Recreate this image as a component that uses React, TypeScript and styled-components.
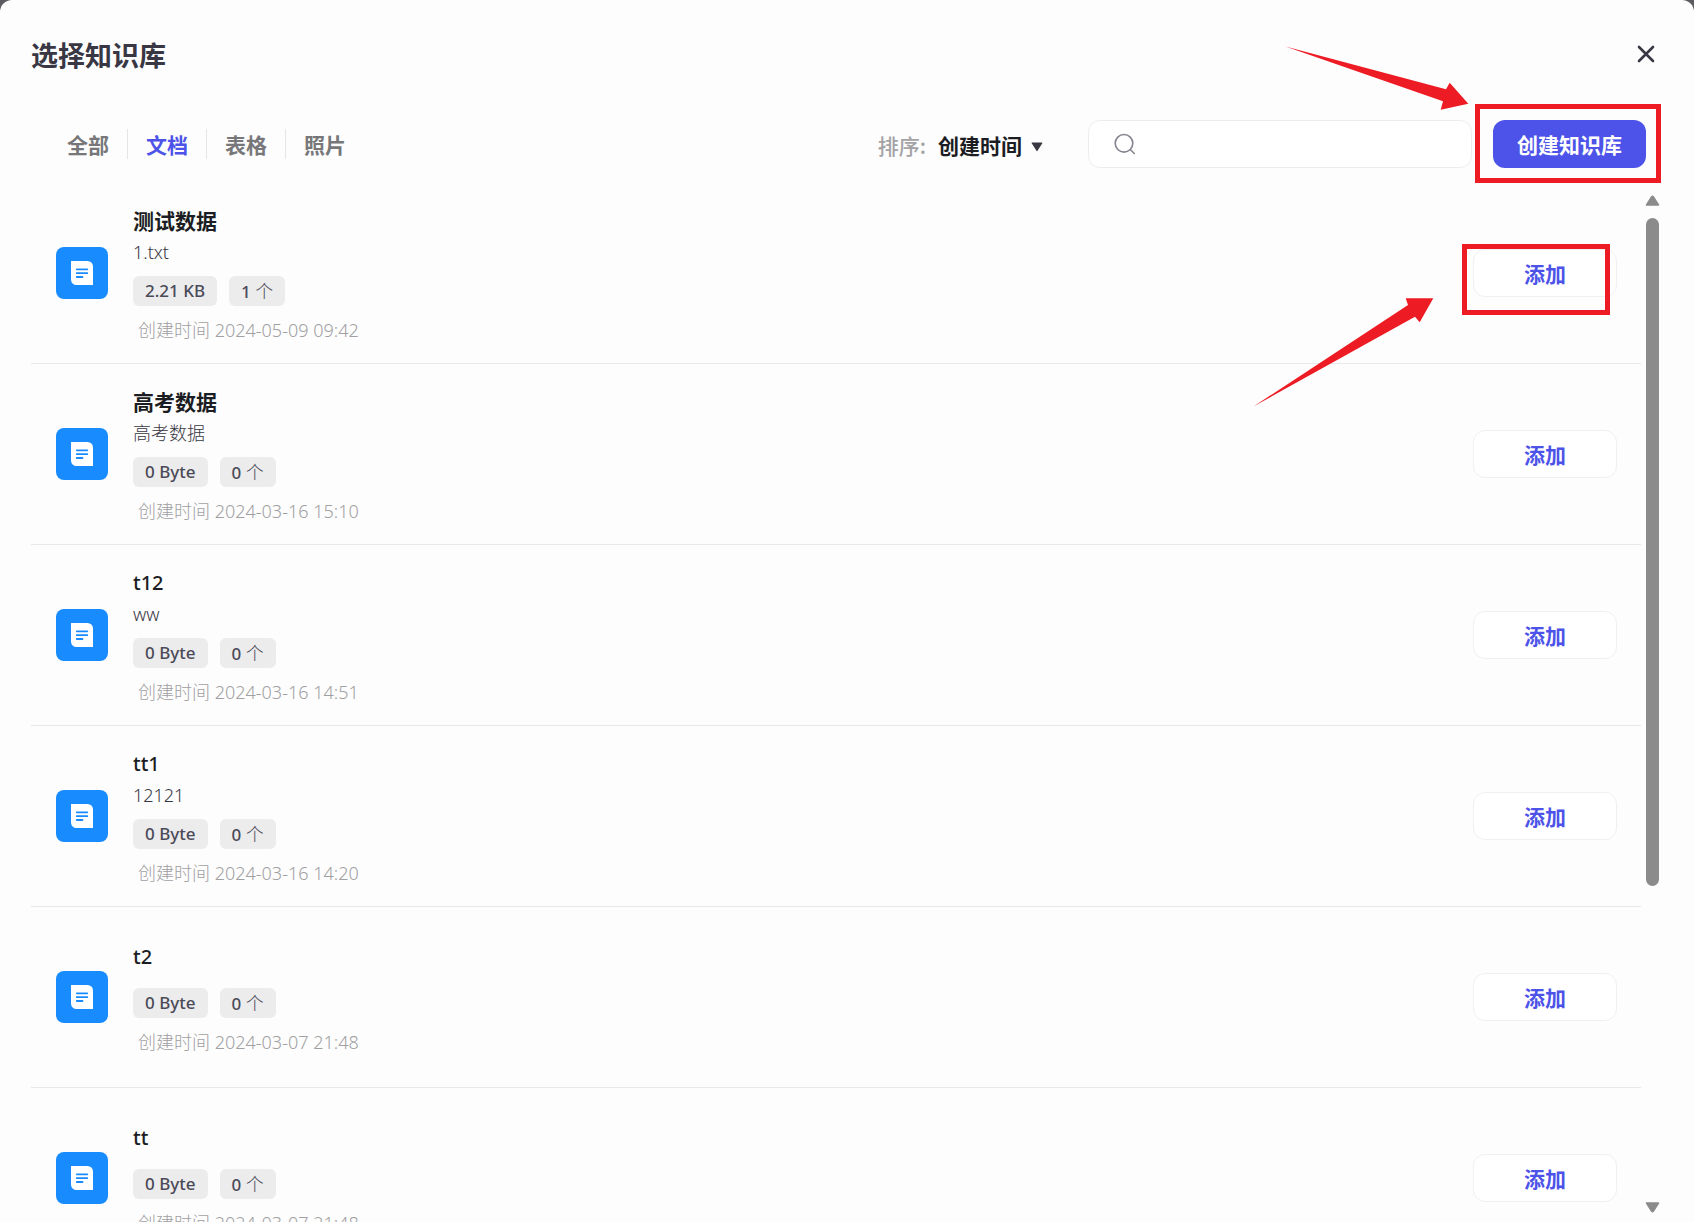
import React, { useState } from "react";
import styled, { createGlobalStyle } from "styled-components";

const GlobalStyle = createGlobalStyle`
  *, *::before, *::after { box-sizing: border-box; }
  body {
    margin: 0;
    background: #5c5c60;
    font-family: "Noto Sans CJK SC", "Noto Sans", sans-serif;
    color: #1c1d23;
  }
  button, input, select { font: inherit; color: inherit; }
`;

const Dialog = styled.main`
  position: relative;
  display: flex;
  flex-direction: column;
  height: 100vh;
  overflow: hidden;
  padding: 0 30px 0 31px;
  border-radius: 12px 12px 0 0;
  background: #fdfdfd;
`;

const Header = styled.header`
  display: flex;
  align-items: center;
  justify-content: space-between;
  height: 108px;
  margin-bottom: 12px;
  padding-right: 6px;
`;

const Title = styled.h1`
  margin: 0;
  padding-top: 2px;
  font-size: 27px;
  line-height: 40px;
  font-weight: 700;
  color: #383743;
`;

const CloseButton = styled.button`
  display: flex;
  padding: 0;
  border: 0;
  background: none;
  cursor: pointer;
`;

const Toolbar = styled.div`
  display: flex;
  align-items: center;
  height: 48px;
  margin-bottom: 15px;
  padding: 0 18px;
`;

const Tabs = styled.nav`
  display: flex;
  flex: 1;
`;

const Tab = styled.button<{ $active: boolean }>`
  height: 30px;
  padding: 0 18px;
  border: 0;
  background: none;
  font-size: 21px;
  line-height: 30px;
  font-weight: 700;
  color: ${(p) => (p.$active ? "#4d53e8" : "#77777a")};
  cursor: pointer;

  & + & { border-left: 1px solid #e6e6e8; }
`;

const SortField = styled.label`
  display: flex;
  align-items: center;
  margin-right: 45px;
  padding-top: 2px;
  font-size: 21px;
  line-height: 30px;
  font-weight: 500;
  color: #a3a3a5;
`;

const SelectWrap = styled.span`
  position: relative;
  display: flex;
  margin-left: 12px;
`;

const SortSelect = styled.select`
  width: 105px;
  height: 30px;
  padding: 0;
  border: 0;
  appearance: none;
  background: none;
  font-weight: 700;
  color: #1c1d23;
`;

const Caret = styled.svg`
  position: absolute;
  right: 0;
  top: 12px;
  pointer-events: none;
`;

const SearchBox = styled.label`
  display: flex;
  align-items: center;
  gap: 12px;
  width: 384px;
  height: 48px;
  margin-right: 21px;
  padding: 0 24px;
  border: 1px solid #ededee;
  border-radius: 12px;
  background: #fff;
`;

const SearchInput = styled.input`
  flex: 1;
  min-width: 0;
  padding: 0;
  border: 0;
  outline: 0;
  background: none;
  font-size: 18px;
`;

const Anchor = styled.div`
  position: relative;
`;

const CreateButton = styled.button`
  display: block;
  height: 48px;
  padding: 0 24px;
  border: 0;
  border-radius: 12px;
  background: #4d53e8;
  font-size: 21px;
  line-height: 30px;
  font-weight: 700;
  color: #fff;
  cursor: pointer;
`;

const AddButton = styled.button`
  display: block;
  width: 144px;
  height: 48px;
  padding: 0;
  border: 1px solid #f0f0f3;
  border-radius: 12px;
  background: #fff;
  font-size: 21px;
  line-height: 30px;
  font-weight: 700;
  color: #4d53e8;
  cursor: pointer;
`;

const Highlight = styled.span<{ $inset: string }>`
  position: absolute;
  inset: ${(p) => p.$inset};
  border: 5px solid #ed1c24;
  pointer-events: none;
`;

const Arrows = styled.svg`
  position: absolute;
  top: 0;
  right: 0;
  pointer-events: none;
`;

const Body = styled.div`
  display: flex;
  flex: 1;
  min-height: 0;
`;

const List = styled.ul`
  flex: 1;
  margin: 0;
  padding: 0;
  overflow: hidden;
  list-style: none;
`;

const Row = styled.li`
  display: flex;
  align-items: center;
  gap: 25px;
  height: 181px;
  padding: 0 24px 0 25px;
  border-bottom: 1px solid #e9e9eb;
`;

const Info = styled.div`
  flex: 1;
  min-width: 0;
  font-family: "Noto Sans", "Noto Sans CJK SC", sans-serif;
`;

const Name = styled.h2<{ $latin: boolean }>`
  margin: 0;
  padding-bottom: 2px;
  font-size: ${(p) => (p.$latin ? 20 : 21)}px;
  line-height: 34px;
  font-weight: ${(p) => (p.$latin ? 500 : 700)};
`;

const Description = styled.p`
  margin: 0;
  font-size: 18px;
  line-height: 24px;
  font-weight: 300;
  color: #383743;
`;

const Chips = styled.div`
  display: flex;
  gap: 12px;
  height: 30px;
  margin: 12px 0;
`;

const Chip = styled.span`
  padding: 0 12px;
  border-radius: 6px;
  background: #ececed;
  font-size: 17px;
  line-height: 30px;
  font-weight: 500;
  color: #4b4a58;
`;

const Unit = styled.span`
  font-size: 18px;
  font-weight: 300;
`;

const Created = styled.p`
  margin: 0;
  padding-left: 5px;
  font-size: 18px;
  line-height: 24px;
  font-weight: 300;
  color: #a0a0a2;
`;

const Scrollbar = styled.div`
  display: flex;
  flex-direction: column;
  align-items: center;
  gap: 12px;
  width: 23px;
  padding: 12px 0 9px;
`;

const Track = styled.div`
  flex: 1;
  width: 13px;
`;

const Thumb = styled.div`
  border-radius: 7px;
  background: #8b8b8b;
`;

type Item = { name: string; description?: string; size: string; count: number; created: string };

const items: Item[] = [
  { name: "测试数据", description: "1.txt", size: "2.21 KB", count: 1, created: "2024-05-09 09:42" },
  { name: "高考数据", description: "高考数据", size: "0 Byte", count: 0, created: "2024-03-16 15:10" },
  { name: "t12", description: "ww", size: "0 Byte", count: 0, created: "2024-03-16 14:51" },
  { name: "tt1", description: "12121", size: "0 Byte", count: 0, created: "2024-03-16 14:20" },
  { name: "t2", size: "0 Byte", count: 0, created: "2024-03-07 21:48" },
  { name: "tt", size: "0 Byte", count: 0, created: "2024-03-07 21:48" },
];

const tabs = ["全部", "文档", "表格", "照片"];

const DocIcon = () => (
  <svg width="52" height="52" viewBox="0 0 52 52" aria-hidden="true">
    <rect width="52" height="52" rx="8" fill="#188cff" />
    <path d="M15 14H31.5A5.5 5.5 0 0 1 37 19.500V38H20.500A5.500 5.500 0 0 1 15 32.500Z" fill="#fff" />
    <path d="M20.800 22.300H31.300M20.800 26.200H31.300M20.800 30H26.500" stroke="#188cff" strokeWidth="1.800" strokeLinecap="round" />
  </svg>
);

const ScrollArrow = ({ down }: { down?: boolean }) => (
  <svg width="15" height="11" viewBox="0 0 15 11" aria-hidden="true">
    <path
      d={down ? "M1.500 1H13.500L8.300 9.300Q7.500 10.300 6.700 9.300Z" : "M1.500 10H13.500L8.300 1.700Q7.500 .7 6.700 1.700Z"}
      fill="#8b8b8b"
      stroke="#8b8b8b"
      strokeWidth="1.500"
      strokeLinejoin="round"
    />
  </svg>
);

export default function App() {
  const [active, setActive] = useState("文档");
  const thumbShare = 68.7;

  return (
    <>
      <GlobalStyle />
      <Dialog>
        <Header>
          <Title>选择知识库</Title>
          <CloseButton type="button" aria-label="关闭">
            <svg width="24" height="24" viewBox="0 0 24 24" fill="none" stroke="#383743" strokeWidth="2.6" strokeLinecap="round">
              <path d="M5 5L19 19M19 5L5 19" />
            </svg>
          </CloseButton>
        </Header>

        <Toolbar>
          <Tabs>
            {tabs.map((tab) => (
              <Tab key={tab} type="button" $active={tab === active} onClick={() => setActive(tab)}>
                {tab}
              </Tab>
            ))}
          </Tabs>
          <SortField>
            排序:
            <SelectWrap>
              <SortSelect>
                <option>创建时间</option>
              </SortSelect>
              <Caret width="12" height="10" viewBox="0 0 12 10" aria-hidden="true">
                <path d="M1.200 1H10.800L6 8.500Z" fill="#383743" stroke="#383743" strokeWidth="1.200" strokeLinejoin="round" />
              </Caret>
            </SelectWrap>
          </SortField>
          <SearchBox>
            <svg width="24" height="24" viewBox="0 0 24 24" fill="none" stroke="#85848f" strokeWidth="1.600" strokeLinecap="round" aria-hidden="true">
              <circle cx="11" cy="11.300" r="8.800" />
              <path d="M17.300 17.500L21.300 21.500" />
            </svg>
            <SearchInput type="text" aria-label="搜索" />
          </SearchBox>
          <Anchor>
            <CreateButton type="button">创建知识库</CreateButton>
            <Highlight $inset="-16px -15px -15px -18px" />
          </Anchor>
        </Toolbar>

        <Body>
          <List>
            {items.map((item, index) => (
              <Row key={item.name}>
                <DocIcon />
                <Info>
                  <Name $latin={/^[\x20-\x7e]+$/.test(item.name)}>{item.name}</Name>
                  {item.description && <Description>{item.description}</Description>}
                  <Chips>
                    <Chip>{item.size}</Chip>
                    <Chip>
                      {item.count} <Unit>个</Unit>
                    </Chip>
                  </Chips>
                  <Created>创建时间 {item.created}</Created>
                </Info>
                <Anchor>
                  <AddButton type="button">添加</AddButton>
                  {index === 0 && <Highlight $inset="-5px 7px -18px -11px" />}
                </Anchor>
              </Row>
            ))}
          </List>
          <Scrollbar>
            <ScrollArrow />
            <Track>
              <Thumb style={{ height: `${thumbShare}%` }} />
            </Track>
            <ScrollArrow down />
          </Scrollbar>
        </Body>

        <Arrows width="450" height="420" viewBox="0 0 450 420" fill="#ed1c24" aria-hidden="true">
          <path d="M41.500 46.500L202 89.300L205.700 82.700L224.300 103.700L196.700 109.700L199 101.300Z" />
          <path d="M9.500 406.500L164 305L161.700 298.300H189.300L175.700 322.300L171 316.700Z" />
        </Arrows>
      </Dialog>
    </>
  );
}
